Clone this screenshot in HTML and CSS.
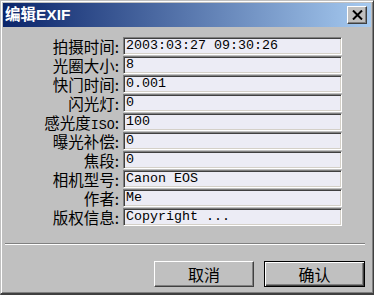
FILE: index.html
```html
<!DOCTYPE html>
<html>
<head>
<meta charset="utf-8">
<link rel="stylesheet" href="styles.css">
</head>
<body>
<div class="window">
  <div class="titlebar">
    <span class="title">编辑EXIF</span>
    <button class="close" aria-label="关闭">
      <svg width="11" height="10" viewBox="0 0 11 10"><path d="M1 0.5 L10 9.5 M10 0.5 L1 9.5" stroke="#000" stroke-width="2" fill="none"/></svg>
    </button>
  </div>
  <div class="body">
    <div class="form">
      <label class="lbl">拍摄时间:</label><div class="field">2003:03:27 09:30:26</div>
      <label class="lbl">光圈大小:</label><div class="field">8</div>
      <label class="lbl">快门时间:</label><div class="field">0.001</div>
      <label class="lbl">闪光灯:</label><div class="field">0</div>
      <label class="lbl">感光度<span class="latin">ISO</span>:</label><div class="field">100</div>
      <label class="lbl">曝光补偿:</label><div class="field">0</div>
      <label class="lbl">焦段:</label><div class="field">0</div>
      <label class="lbl">相机型号:</label><div class="field">Canon EOS</div>
      <label class="lbl">作者:</label><div class="field">Me</div>
      <label class="lbl">版权信息:</label><div class="field">Copyright ...</div>
    </div>
    <div class="sep"></div>
    <div class="buttons">
      <button class="btn">取消</button>
      <button class="btn default">确认</button>
    </div>
  </div>
</div>
</body>
</html>
```
FILE: styles.css
```css
html, body {
  margin: 0;
  padding: 0;
  background: #c0c0c0;
}
.window {
  width: 374px;
  height: 295px;
  box-sizing: border-box;
  background: #c0c0c0;
  border-style: solid;
  border-width: 1px 1px 2px 1px;
  border-color: #c0c0c0 #404040 #404040 #c0c0c0;
  box-shadow: inset 1px 1px #ffffff, inset -1px -1px #808080;
  padding: 2px 2px 2px 2px;
  display: flex;
  flex-direction: column;
  font-family: "Noto Sans CJK SC", sans-serif;
}
.titlebar {
  height: 24px;
  flex: none;
  background: linear-gradient(to right, #0a246a, #a6caf0);
  display: flex;
  align-items: center;
  justify-content: space-between;
  padding: 0 4px 0 2px;
}
.title {
  color: #fff;
  font-weight: bold;
  font-size: 15.5px;
  font-family: "Liberation Sans", "Noto Sans CJK SC", sans-serif;
  line-height: 24px;
}
.close {
  width: 20px;
  height: 18px;
  padding: 0;
  margin: 0;
  background: #c0c0c0;
  border-style: solid;
  border-width: 1px;
  border-color: #ffffff #404040 #404040 #ffffff;
  box-shadow: inset -1px -1px #808080;
  display: flex;
  align-items: center;
  justify-content: center;
}
.close svg { display: block; }
.body {
  flex: 1;
  display: flex;
  flex-direction: column;
  padding-top: 10px;
}
.form {
  display: grid;
  grid-template-columns: 116px 219px;
  grid-auto-rows: 18px;
  column-gap: 4px;
  row-gap: 1px;
}
.lbl {
  display: block;
  font-size: 15.5px;
  line-height: 18px;
  text-align: right;
  color: #000;
  white-space: nowrap;
}
.latin {
  font-family: "Liberation Mono", monospace;
  font-size: 13.33px;
  line-height: 1;
}
.field {
  box-sizing: border-box;
  height: 18px;
  background: #ececf5;
  border-style: solid;
  border-width: 1px;
  border-color: #808080 #ffffff #ffffff #808080;
  box-shadow: inset 1px 1px #404040, inset -1px -1px #d4d0c8;
  font-family: "Liberation Mono", monospace;
  font-size: 13.33px;
  line-height: 16px;
  padding-left: 2px;
  color: #000;
  white-space: nowrap;
}
.sep {
  margin: 17px 6px 0 2px;
  height: 1px;
  background: #808080;
  border-bottom: 1px solid #ffffff;
}
.buttons {
  display: flex;
  justify-content: flex-end;
  gap: 10px;
  margin-top: 16px;
  padding-right: 6px;
}
.btn {
  box-sizing: border-box;
  width: 100px;
  height: 26px;
  margin: 0;
  padding: 0;
  background: #c0c0c0;
  font-family: "Noto Sans CJK SC", sans-serif;
  font-size: 16px;
  color: #000;
  border-style: solid;
  border-width: 1px;
  border-color: #ffffff #404040 #404040 #ffffff;
  box-shadow: inset -1px -1px #808080;
}
.btn.default {
  width: 101px;
  border: 1px solid #000;
  box-shadow: inset 1px 1px #ffffff, inset -1px -1px #404040, inset -2px -2px #808080;
}
```
